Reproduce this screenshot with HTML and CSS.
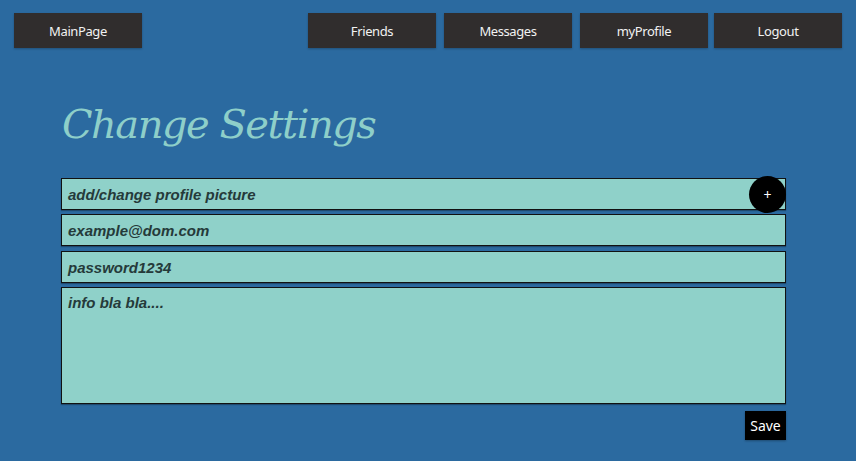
FILE: index.html
```html
<!DOCTYPE html>
<html>
<head>
<meta charset="utf-8">
<link rel="stylesheet" href="styles.css">
</head>
<body>
<nav class="nav">
  <a class="nav-btn">MainPage</a>
  <div class="nav-right">
    <a class="nav-btn">Friends</a>
    <a class="nav-btn">Messages</a>
    <a class="nav-btn">myProfile</a>
    <a class="nav-btn nav-last">Logout</a>
  </div>
</nav>
<main class="content">
  <h1 class="title">Change Settings</h1>
  <form class="form">
    <div class="field field-pic">
      <span class="ph">add/change profile picture</span>
      <span class="plus">+</span>
    </div>
    <div class="field"><span class="ph">example@dom.com</span></div>
    <div class="field field-pass"><span class="ph">password1234</span></div>
    <div class="field field-area"><span class="ph">info bla bla....</span></div>
    <div class="actions"><span class="save">Save</span></div>
  </form>
</main>
</body>
</html>
```
FILE: styles.css
```css
html, body {
  margin: 0;
  padding: 0;
  background: #2b6aa0;
  height: 100%;
}
body {
  font-family: "Noto Sans", sans-serif;
}
.nav {
  display: flex;
  justify-content: space-between;
  padding: 13px 14px 0 14px;
}
.nav-right {
  display: flex;
  gap: 8px;
}
.nav-btn {
  width: 128px;
  height: 35px;
  background: #302d2d;
  color: #f2f2f2;
  font-size: 13px;
  letter-spacing: -0.4px;
  display: flex;
  align-items: center;
  justify-content: center;
  box-shadow: 0 1px 2px rgba(0,0,0,0.25);
}
.nav-last { margin-left: -2px; }
.content {
  padding: 0 70px 0 61px;
}
.title {
  margin: 49px 0 0 1px;
  font-family: "DejaVu Serif", serif;
  font-style: italic;
  font-weight: normal;
  font-size: 40px;
  line-height: 54px;
  color: #8ecfc9;
  letter-spacing: -1.5px;
}
.form {
  margin-top: 27px;
  display: flex;
  flex-direction: column;
  gap: 4px;
}
.field {
  position: relative;
  height: 30px;
  border: 1px solid #111;
  background: #8fd1c9;
  display: flex;
  align-items: center;
  padding-left: 6px;
  box-shadow: 0 1px 1px rgba(0,0,0,0.3);
}
.field-pass {
  margin-top: 1px;
}
.field-area {
  align-items: flex-start;
  padding-top: 6px;
  box-sizing: border-box;
  height: 117px;
}
.ph {
  font-family: "Liberation Sans", Arial, sans-serif;
  font-weight: bold;
  font-style: italic;
  font-size: 15px;
  color: #253a3a;
}
.plus {
  position: absolute;
  right: -1px;
  top: -3px;
  width: 37px;
  height: 37px;
  border-radius: 50%;
  background: #000;
  color: #fff;
  font-size: 14px;
  display: flex;
  align-items: center;
  justify-content: center;
}
.actions {
  display: flex;
  justify-content: flex-end;
  margin-top: 3px;
}
.save {
  width: 41px;
  height: 29px;
  background: #000;
  color: #fff;
  font-size: 14px;
  display: flex;
  align-items: center;
  justify-content: center;
  box-shadow: 0 1px 2px rgba(0,0,0,0.3);
}
```
